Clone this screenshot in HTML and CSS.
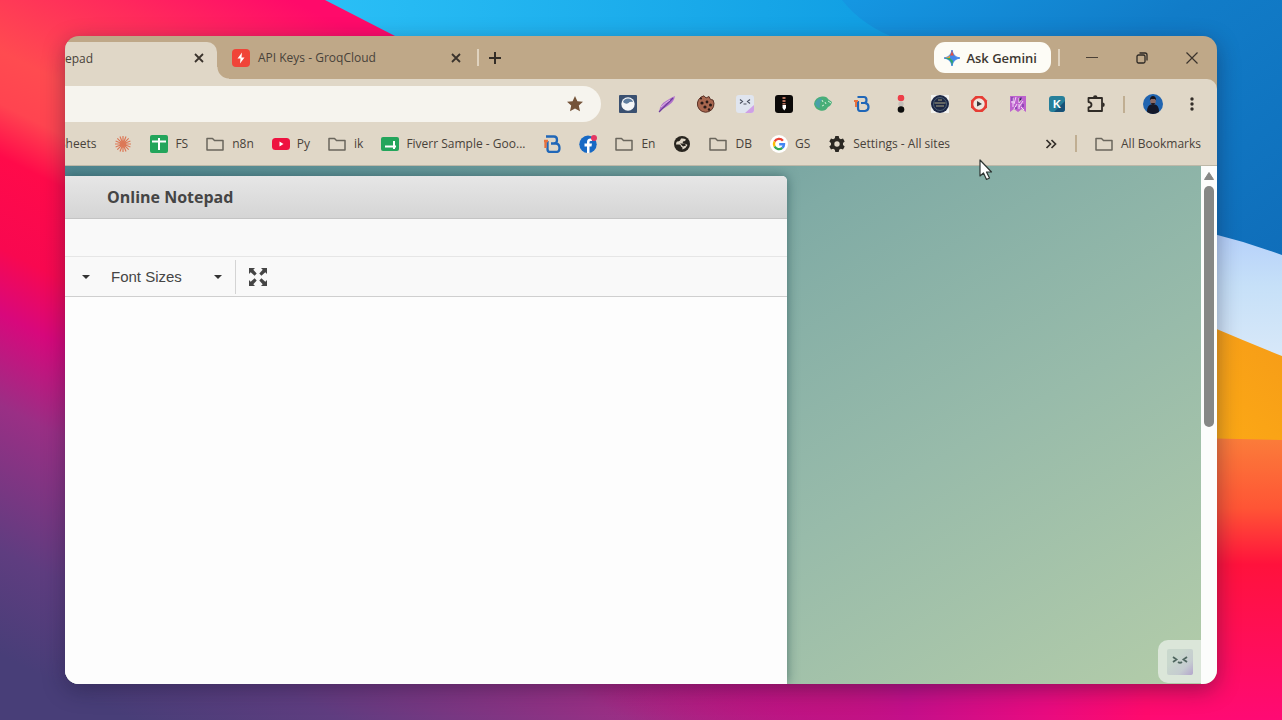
FILE: index.html
```html
<!DOCTYPE html>
<html lang="en">

<head>
  <meta charset="UTF-8">
  <title>Online Notepad</title>
  <link rel="stylesheet" href="styles.css">
</head>

<body>
  <!-- wallpaper -->
  <svg class="wallpaper" viewBox="0 0 1282 720" preserveAspectRatio="none" aria-hidden="true">
    <defs>
      <linearGradient id="sweep" gradientUnits="userSpaceOnUse" x1="200" y1="-400" x2="-325" y2="650">
        <stop offset=".27" stop-color="#ff0a6a" />
        <stop offset=".34" stop-color="#ff2a5c" />
        <stop offset=".42" stop-color="#ff4b50" />
        <stop offset=".46" stop-color="#ff4450" />
        <stop offset=".5" stop-color="#ff0a4a" />
        <stop offset=".57" stop-color="#f80850" />
        <stop offset=".62" stop-color="#d8087c" />
        <stop offset=".69" stop-color="#9a2f85" />
        <stop offset=".8" stop-color="#5f3d80" />
        <stop offset=".88" stop-color="#483e78" />
      </linearGradient>
      <linearGradient id="floor">
        <stop offset="0" stop-color="#8f2d85" stop-opacity="0" />
        <stop offset=".45" stop-color="#c40f8a" />
        <stop offset=".65" stop-color="#e80b80" />
        <stop offset=".8" stop-color="#ff0a6d" />
      </linearGradient>
      <linearGradient id="sky">
        <stop offset="0" stop-color="#2abff6" />
        <stop offset=".55" stop-color="#12a0e4" />
        <stop offset="1" stop-color="#1182d2" />
      </linearGradient>
      <linearGradient id="deep" x2="1" y2="1">
        <stop offset="0" stop-color="#1597e2" />
        <stop offset=".4" stop-color="#117cc8" />
        <stop offset="1" stop-color="#0f6cb8" />
      </linearGradient>
      <linearGradient id="cloud" x2="0" y2="1">
        <stop offset="0" stop-color="#b2cdfb" />
        <stop offset=".4" stop-color="#c6e0f8" />
        <stop offset="1" stop-color="#deebf9" />
      </linearGradient>
      <linearGradient id="sun" x1="1" x2="0" y2="1">
        <stop offset="0" stop-color="#f59a18" />
        <stop offset="1" stop-color="#ffae14" />
      </linearGradient>
      <linearGradient id="fire" x2="0" y2="1">
        <stop offset="0" stop-color="#fb7d3a" />
        <stop offset=".25" stop-color="#ff5535" />
        <stop offset=".45" stop-color="#ff123c" />
        <stop offset="1" stop-color="#ff0a74" />
      </linearGradient>
    </defs>
    <rect width="1282" height="720" fill="url(#sweep)" />
    <rect x="600" y="600" width="682" height="120" fill="url(#floor)" />
    <path d="M325 0 L395 36 L500 90 H1282 V0 Z" fill="url(#sky)" />
    <path d="M842 0 Q862 26 900 40 L1150 300 H1282 V0 Z" fill="url(#deep)" />
    <path d="M1150 222 Q1217 231 1282 255 V380 H1150 Z" fill="url(#cloud)" />
    <path d="M1150 300 Q1217 330 1282 356 V445 H1150 Z" fill="url(#sun)" />
    <path d="M1150 437 L1282 440 V720 H1150 Z" fill="url(#fire)" />
  </svg>

  <div class="window">
    <div class="tabs">
      <div class="tab active">
        <span>epad</span>
        <button class="plain close" aria-label="Close tab">
          <svg width="10" height="10" viewBox="0 0 10 10"><path d="M1 1l8 8M9 1l-8 8" stroke="#3a332c" stroke-width="1.800" /></svg>
        </button>
      </div>
      <div class="tab other">
        <svg width="18" height="18" viewBox="0 0 18 18"><rect width="18" height="18" rx="4" fill="#f04438" /><path d="M10 3.500L5.500 9.500H8.500L8 14.500L12.500 8.500H9.500Z" fill="#fff" /></svg>
        <span class="grow">API Keys - GroqCloud</span>
        <button class="plain close" aria-label="Close tab">
          <svg width="10" height="10" viewBox="0 0 10 10"><path d="M1 1l8 8M9 1l-8 8" stroke="#3a332c" stroke-width="1.800" /></svg>
        </button>
      </div>
      <i class="line light"></i>
      <button class="plain" aria-label="New tab">
        <svg width="12" height="12" viewBox="0 0 12 12"><path d="M6 0v12M0 6h12" stroke="#332d27" stroke-width="2" /></svg>
      </button>
      <div class="controls">
        <button class="gemini">
          <svg width="16" height="16" viewBox="0 0 16 16"><path d="M8 0Q9 7 16 8Q9 9 8 16Q7 9 0 8Q7 7 8 0Z" fill="#4486e8" stroke="#4486e8" /><path d="M8 0Q8.500 4 10 5.500L6 5.500Q7.500 4 8 0Z" fill="#e8503e" /><path d="M0 8Q4 7.500 6 5.500V8Z" fill="#e59a3a" /><path d="M8 16Q7.500 12 6 10.500Q4 8.500 0 8L6 8L9 11Z" fill="#2fa866" /></svg>
          Ask Gemini
        </button>
        <i class="line light"></i>
        <div class="winbtns">
          <button class="plain" aria-label="Minimize"><svg width="12" height="12" viewBox="0 0 12 12"><path d="M0 5.500h12" stroke="#4a4036" /></svg></button>
          <button class="plain" aria-label="Restore"><svg width="12" height="12" viewBox="0 0 12 12" fill="none" stroke="#2e2924" stroke-width="1.300"><rect x="1" y="3" width="8" height="8" rx="1.500" /><path d="M3.500 1H9a2 2 0 0 1 2 2V8.500" /></svg></button>
          <button class="plain" aria-label="Close window"><svg width="12" height="12" viewBox="0 0 12 12"><path d="M.5.5l11 11M11.500.5l-11 11" stroke="#3a332c" stroke-width="1.200" /></svg></button>
        </div>
      </div>
    </div>

    <div class="chrome">
      <div class="toolbar">
        <div class="omnibox">
          <input type="text" aria-label="Address and search bar">
          <button class="plain" aria-label="Edit bookmark">
            <svg width="16" height="16" viewBox="0 0 16 16"><path d="M8 0l2.400 5.200 5.600.6-4.200 3.800 1.200 5.700L8 12.400 3 15.300l1.200-5.700L0 5.800l5.600-.6z" fill="#75543a" /></svg>
          </button>
        </div>
        <div class="extensions">
          <button class="plain" aria-label="Wave extension"><svg viewBox="0 0 18 18"><rect width="18" height="18" rx="1" fill="#3a5070" /><circle cx="9" cy="9" r="6.700" fill="#f4f6f8" /><path d="M4 7Q5 3.500 9 3.500Q13 3.500 14 7Q11 6 9.500 8Q7 10 4 7" fill="#5f7ea0" /></svg></button>
          <button class="plain" aria-label="Feather extension"><svg viewBox="0 0 18 18"><path d="M1 17Q2 9 8 6Q12 3 17 1Q16 7 11 10Q7 13 4 14Z" fill="#b274cc" /><path d="M1 17L15 3" stroke="#6f3c9c" stroke-width="1.200" /><path d="M3 12Q7 8 12 5" stroke="#e0b4e4" fill="none" /></svg></button>
          <button class="plain" aria-label="Cookie extension"><svg viewBox="0 0 18 18"><path d="M7 .8A8.300 8.300 0 1 0 16 5L13.500 4.500L12 1.500L9 3Z" fill="#a8674f" stroke="#5b3328" /><circle cx="5" cy="8" r="1.600" fill="#2a1a18" /><circle cx="10" cy="7" r="1.400" fill="#2a1a18" /><circle cx="13.500" cy="10" r="1.500" fill="#2a1a18" /><circle cx="8" cy="12" r="1.600" fill="#2a1a18" /><circle cx="12" cy="14.500" r="1.200" fill="#2a1a18" /><circle cx="4" cy="3.500" r="1" fill="#2a1a18" /></svg></button>
          <button class="plain" aria-label="Face extension"><svg viewBox="0 0 18 18"><rect width="18" height="18" rx="3" fill="#e0e5ef" /><path d="M18 10V15a3 3 0 0 1-3 3H9Z" fill="#cfa0e6" /><path d="M4 4.500l2.500 2L4 8.500M14 4.500l-2.500 2L14 8.500M7.500 9h3" stroke="#4c5260" fill="none" stroke-width="1.200" /></svg></button>
          <button class="plain" aria-label="Tie extension"><svg viewBox="0 0 18 18"><rect width="18" height="18" rx="3" fill="#0b0908" /><path d="M7.500 2h3v2h-3zM7.500 5h3v2h-3zM7.500 8h3v1.500h-3z" fill="#b5705c" /><path d="M7.500 10h3.500v3l-1.700 2.500L7.500 13z" fill="#fff" /></svg></button>
          <button class="plain" aria-label="Leaf extension"><svg viewBox="0 0 18 18"><path d="M0 9Q1 2 8 1.500Q13 1 14 4L18 7Q17 11 14 12Q11 17 6 15.500Q1 14 0 9" fill="#48ae78" /><path d="M1 8Q4 2 8 4Q5 8 6 13Q2 13 1 8" fill="#48a0a8" /><path d="M8 5l1 2M11 7l1 2M8 11l2-1M14 6l3 2" stroke="#d0eed5" /></svg></button>
          <button class="plain" aria-label="B extension"><svg viewBox="0 0 18 18" fill="none" stroke="#2067b8" stroke-width="2.200"><path d="M4.500 2H11Q13.500 2 13.500 5T11 8H8H12Q15.500 8.500 15.500 12T12 16H7Q5 16 5 13V6" /><path d="M3 5V12M1 6h4" stroke="#e9713d" stroke-width="2" /></svg></button>
          <button class="plain" aria-label="Recorder extension"><svg viewBox="0 0 18 18"><circle cx="9" cy="3" r="3.300" fill="#ee3e48" /><circle cx="9" cy="9" r="2.700" fill="#c4bfba" /><circle cx="9" cy="14.500" r="3.300" fill="#0d0d0d" /></svg></button>
          <button class="plain" aria-label="Badge extension"><svg viewBox="0 0 18 18"><rect width="18" height="18" fill="#f3f3f0" /><circle cx="9" cy="9" r="9" fill="#1d2745" /><circle cx="9" cy="9" r="6.500" fill="none" stroke="#4b6074" /><path d="M3.500 8h11M5 11h8M7 5h4" stroke="#a8a482" stroke-width="1.200" /></svg></button>
          <button class="plain" aria-label="Video extension"><svg viewBox="0 0 18 18"><path d="M5.500 1h7L17 5.500v7L12.500 17h-7L1 12.500v-7Z" fill="#e63c34" /><circle cx="9" cy="9" r="5.700" fill="#eee7df" /><path d="M7 6l5 3-5 2.500z" fill="#39383c" /></svg></button>
          <button class="plain" aria-label="Pattern extension"><svg viewBox="0 0 18 18"><path d="M1 1H17V17L13 14L9 17L5 14L1 17Z" fill="#bd62ce" /><path d="M4 3v9M7 2l-2 7M10 3v5l3-4M8 9l-3 5M14 6l-4 6M12 12l3 3M2 7h3M10 14V9" stroke="#f3d9f7" stroke-width="1" /><path d="M3 2v4M12 2v3M7 12v2M14 9v3" stroke="#60329b" /></svg></button>
          <button class="plain" aria-label="K extension"><svg viewBox="0 0 18 18"><rect x="1" y="1" width="16" height="16" rx="3" fill="#267f9a" /><path d="M17 6V14a3 3 0 0 1-3 3H6Z" fill="#175177" /><text x="9" y="13" text-anchor="middle" class="mark">K</text></svg></button>
          <button class="plain" aria-label="Extensions"><svg viewBox="0 0 18 18"><path d="M1.500 3H15V16H1.500V12.500Q4.500 12 4.500 9.700T1.500 7Z" fill="none" stroke="#302b26" stroke-width="1.800" stroke-linejoin="round" /><path d="M6 2.500a2.200 2.200 0 0 1 4.500 0zM15.500 7.500a2.200 2.200 0 0 1 0 4.500z" fill="#302b26" /></svg></button>
        </div>
        <i class="line"></i>
        <button class="plain profile" aria-label="Profile"><svg width="20" height="20" viewBox="0 0 20 20"><circle cx="10" cy="10" r="10" fill="#2064b0" /><path d="M4 18Q4 11 8 10.500H12Q16 11 16 18Q10 22 4 18" fill="#141829" /><ellipse cx="10" cy="7" rx="2.800" ry="3.800" fill="#8a6a66" /><path d="M6.800 6.500Q7 2 10 2T13.200 6.500L12 5H8Z" fill="#17141d" /><path d="M8 9h4l-1 2.500H9z" fill="#221c25" /></svg></button>
        <button class="plain" aria-label="Menu"><svg width="18" height="18" viewBox="0 0 18 18" fill="#332e29"><circle cx="9" cy="4" r="1.700" /><circle cx="9" cy="9" r="1.700" /><circle cx="9" cy="14" r="1.700" /></svg></button>
      </div>

      <nav class="bookmarks" aria-label="Bookmarks">
        <a href="#">Sheets</a>
        <a href="#" aria-label="Claude"><svg viewBox="0 0 18 18" stroke="#dc7857" stroke-width="1.200"><path d="M9 1v16M1 9h16M3.300 3.300l11.400 11.400M14.700 3.300L3.300 14.700M6 1.600l6 14.800M12 1.600L6 16.400M1.600 6l14.800 6M16.400 6L1.600 12" /></svg></a>
        <a href="#"><svg viewBox="0 0 18 18"><rect width="18" height="18" rx="2" fill="#23a55b" /><path d="M2 6.500h14M9 3v12" stroke="#fff" stroke-width="2" /></svg>FS</a>
        <a href="#" class="folder"><svg viewBox="0 0 18 18"><path d="M1 3.500H6.500L8.500 5.500H17V15H1Z" fill="none" stroke="#6a665c" stroke-width="1.500" stroke-linejoin="round" /></svg>n8n</a>
        <a href="#"><svg viewBox="0 0 18 18"><rect y="3" width="18" height="12" rx="3.500" fill="#ee1240" /><path d="M7.500 6.500l4 2.500-4 2.500z" fill="#fff" /></svg>Py</a>
        <a href="#" class="folder"><svg viewBox="0 0 18 18"><path d="M1 3.500H6.500L8.500 5.500H17V15H1Z" fill="none" stroke="#6a665c" stroke-width="1.500" stroke-linejoin="round" /></svg>ik</a>
        <a href="#"><svg viewBox="0 0 18 18"><rect y="2" width="18" height="14" rx="2" fill="#23a55b" /><path d="M4 11.500h11M13 6v8" stroke="#fff" stroke-width="2" /></svg>Fiverr Sample - Goo...</a>
        <a href="#" aria-label="B"><svg viewBox="0 0 18 18" fill="none" stroke="#2067b8" stroke-width="2.300"><path d="M3 1.500H11Q14 1.500 14 5T11 8.500H8H13Q16.500 9 16.500 13T13 17H7Q4.500 17 4.500 14V6" /><path d="M2.500 5V13M1 6h4" stroke="#e9713d" /></svg></a>
        <a href="#" aria-label="Facebook"><svg viewBox="0 0 18 18"><circle cx="9" cy="9.300" r="8.700" fill="#1769c4" /><path d="M8 18V11.500H5.500V8.500H8V7Q8 3.500 11.500 3.500H13V6H11.800Q10.500 6 10.500 7.300V8.500H13L12.500 11.500H10.500V18Z" fill="#fff" /><circle cx="15" cy="3" r="3" fill="#e53762" /></svg></a>
        <a href="#" class="folder"><svg viewBox="0 0 18 18"><path d="M1 3.500H6.500L8.500 5.500H17V15H1Z" fill="none" stroke="#6a665c" stroke-width="1.500" stroke-linejoin="round" /></svg>En</a>
        <a href="#" aria-label="Site"><svg viewBox="0 0 18 18"><circle cx="9" cy="9" r="8" fill="#28251f" /><path d="M8 3.500Q11 3 13 4.500Q12.500 6.500 10 6.500Q9 7.500 10.500 8.500Q13.500 8.500 14.500 10Q13 13.500 9.500 14.500Q10 12 8 11.500Q8 10 6.500 9.500H3Q3 7.500 4 6.500Q7 7 8 3.500" fill="#e0d7c7" /><path d="M7 8.500h5l1 2-3 1z" fill="#28251f" /></svg></a>
        <a href="#" class="folder"><svg viewBox="0 0 18 18"><path d="M1 3.500H6.500L8.500 5.500H17V15H1Z" fill="none" stroke="#6a665c" stroke-width="1.500" stroke-linejoin="round" /></svg>DB</a>
        <a href="#"><svg viewBox="0 0 18 18" fill="none" stroke-width="2.400"><circle cx="9" cy="9" r="9" fill="#fff" /><path d="M12.900 5.700A5 5 0 0 0 4.600 6.500" stroke="#ea4335" /><path d="M4.600 6.500A5.300 5.300 0 0 0 4.600 11.500" stroke="#fbbc05" /><path d="M4.600 11.500A5 5 0 0 0 12.300 12.900" stroke="#34a853" /><path d="M12.300 12.900Q14 11.500 14 9.200H9.200" stroke="#4285f4" /></svg>GS</a>
        <a href="#"><svg viewBox="0 0 18 18"><path d="M7.300 1h3.400l.5 2.300 1.600.9 2.200-.8 1.700 3-1.700 1.600v2l1.700 1.600-1.700 3-2.200-.8-1.600.9-.5 2.300H7.300l-.5-2.300-1.600-.9-2.200.8-1.700-3L3 10V8L1.300 6.400l1.700-3 2.200.8 1.600-.9Z" fill="#2b2823" /><circle cx="9" cy="9" r="2.700" fill="#e0d7c7" /></svg>Settings - All sites</a>
        <div class="more">
          <button class="plain" aria-label="More bookmarks"><svg width="12" height="12" viewBox="0 0 12 12"><path d="M1.500 2l4 4-4 4M6.500 2l4 4-4 4" fill="none" stroke="#332e29" stroke-width="1.700" /></svg></button>
          <i class="line"></i>
          <a href="#" class="folder"><svg viewBox="0 0 18 18"><path d="M1 3.500H6.500L8.500 5.500H17V15H1Z" fill="none" stroke="#6a665c" stroke-width="1.500" stroke-linejoin="round" /></svg>All Bookmarks</a>
        </div>
      </nav>
    </div>

    <div class="view">
      <main class="page">
        <div class="notepad">
          <h1>Online Notepad</h1>
          <div class="menubar"></div>
          <div class="tools">
            <button class="plain caret" aria-label="Font family"><svg width="8" height="4" viewBox="0 0 8 4"><path d="M0 0h8L4 4z" fill="#333" /></svg></button>
            <label class="sizes">
              <select aria-label="Font Sizes">
                <option>Font Sizes</option>
              </select>
              <svg width="8" height="4" viewBox="0 0 8 4"><path d="M0 0h8L4 4z" fill="#333" /></svg>
            </label>
            <button class="plain full" aria-label="Fullscreen"><svg width="20" height="20" viewBox="0 0 20 20" fill="#454545"><path d="M1 1H7L5.300 2.700L8.700 6.600L6.600 8.700L2.700 5.300L1 7Z" /><path d="M19 1H13L14.700 2.700L11.300 6.600L13.400 8.700L17.300 5.300L19 7Z" /><path d="M1 19H7L5.300 17.300L8.700 13.400L6.600 11.300L2.700 14.700L1 13Z" /><path d="M19 19H13L14.700 17.300L11.300 13.400L13.400 11.300L17.300 14.700L19 13Z" /></svg></button>
          </div>
          <textarea class="editor" aria-label="Note"></textarea>
        </div>
        <button class="assistant" aria-label="Assistant">
          <svg width="26" height="26" viewBox="0 0 26 26">
            <defs><linearGradient id="face" x2="1" y2="1"><stop offset=".3" stop-color="#c9d8cd" /><stop offset=".7" stop-color="#c5ccd0" /><stop offset="1" stop-color="#b3a5cc" /></linearGradient></defs>
            <rect width="26" height="26" rx="2" fill="url(#face)" />
            <path d="M6 8l3.500 2.500L6 13M20 8l-3.500 2.500L20 13M11 13q2 1.500 4 0" fill="none" stroke="#4f665f" stroke-width="1.800" />
          </svg>
        </button>
      </main>
      <div class="scrollbar">
        <svg width="10" height="8" viewBox="0 0 10 8"><path d="M5 0.500L9.500 7.500H.5Z" fill="#868886" stroke="#868886" stroke-linejoin="round" /></svg>
        <div class="thumb"></div>
      </div>
    </div>
  </div>

  <svg class="cursor" width="14" height="22" viewBox="0 0 14 22"><path d="M1 1V17L4.500 14L7.500 20.500L10.500 19L7.500 13H12.500Z" fill="#fff" stroke="#2d3532" stroke-width="1.200" stroke-linejoin="round" /></svg>
</body>

</html>
```

FILE: styles.css
```css
* {
  box-sizing: border-box;
}

body {
  margin: 0;
  height: 100vh;
  padding: 36px 65px;
  overflow: hidden;
  position: relative;
  font-family: "Open Sans", "Noto Sans", sans-serif;
  font-size: 12px;
  color: #48423a;
}

svg {
  display: block;
  flex-shrink: 0;
}

.wallpaper {
  position: absolute;
  top: 0;
  left: 0;
  width: 100%;
  height: 100%;
}

.window {
  position: relative;
  height: 100%;
  display: flex;
  flex-direction: column;
  background: #bfa888;
  border-radius: 14px;
  box-shadow: 0 6px 22px rgba(20, 20, 50, 0.4);
  overflow: hidden;
}

.plain {
  display: flex;
  align-items: center;
  justify-content: center;
  padding: 0;
  border: none;
  background: none;
  cursor: pointer;
}

.line {
  width: 2px;
  height: 17px;
  background: #c0ae92;
}

.line.light {
  background: #e0d3bf;
}

/* tabs */

.tabs {
  display: flex;
  align-items: center;
  height: 43px;
}

.tab {
  display: flex;
  align-items: center;
}

.tab.active {
  position: relative;
  align-self: flex-end;
  justify-content: space-between;
  width: 152px;
  height: 37px;
  padding-right: 13px;
  padding-bottom: 5px;
  background: #e0d7c7;
  border-top-right-radius: 10px;
}

.tab.active::after {
  content: "";
  position: absolute;
  left: 100%;
  bottom: 0;
  width: 12px;
  height: 12px;
  background: radial-gradient(circle at 100% 0, transparent 11px, #e0d7c7 12px);
}

.tab.other {
  width: 260px;
  padding: 0 16px 0 15px;
  gap: 8px;
}

.grow {
  flex: 1;
}

.tabs > .line {
  margin-right: 10px;
}

.controls {
  display: flex;
  align-items: center;
  gap: 7px;
  margin-left: auto;
}

.gemini {
  display: flex;
  align-items: center;
  gap: 6px;
  height: 31px;
  padding: 0 14px 0 10px;
  border: none;
  border-radius: 11px;
  background: #fdfcf6;
  font-family: inherit;
  font-size: 13px;
  font-weight: 600;
  color: #3d3831;
}

.winbtns {
  display: flex;
}

.winbtns .plain {
  width: 50px;
  height: 30px;
}

/* address bar and bookmarks */

.chrome {
  background: #e0d7c7;
  border-top-right-radius: 10px;
  border-bottom: 1px solid #bdb8a8;
}

.toolbar {
  display: flex;
  align-items: center;
  gap: 18px;
  padding: 7px 16px 0 0;
}

.omnibox {
  flex: 1;
  display: flex;
  align-items: center;
  height: 36px;
  padding-right: 18px;
  background: #f6f4ee;
  border-radius: 0 18px 18px 0;
}

.omnibox input {
  flex: 1;
  min-width: 0;
  border: none;
  background: none;
  outline: none;
}

.extensions {
  display: flex;
  gap: 21px;
}

.extensions svg,
.bookmarks a svg {
  width: 18px;
  height: 18px;
}

.profile {
  margin-right: 2px;
}

.mark {
  font: bold 11px "Liberation Sans", sans-serif;
  fill: #fff;
}

.bookmarks {
  display: flex;
  align-items: center;
  gap: 18px;
  height: 43px;
  margin-left: -6px;
  padding-right: 16px;
}

.bookmarks a {
  display: flex;
  align-items: center;
  gap: 7px;
  color: inherit;
  text-decoration: none;
  white-space: nowrap;
}

.bookmarks .folder {
  gap: 8px;
}

.more {
  display: flex;
  align-items: center;
  gap: 18px;
  margin-left: auto;
}

/* page */

.view {
  flex: 1;
  display: flex;
  min-height: 0;
}

.page {
  position: relative;
  flex: 1;
  display: flex;
  padding-top: 10px;
  overflow: hidden;
  background: linear-gradient(150deg, #4f8690 0%, #80aba5 40%, #98bbaa 68%, #b3cca9 100%);
}

.notepad {
  display: flex;
  flex-direction: column;
  width: 64%;
  max-width: 722px;
  border-top-right-radius: 5px;
  background: #fdfdfd;
  box-shadow: 0 0 12px rgba(30, 70, 75, 0.6);
  overflow: hidden;
}

.notepad h1 {
  margin: 0;
  padding: 0 42px;
  font-size: 16px;
  line-height: 42px;
  color: #454545;
  background: linear-gradient(#e6e6e6, #d5d5d5);
  border-bottom: 1px solid #c4c4c4;
}

.menubar {
  height: 38px;
  background: #f9f9f9;
  border-bottom: 1px solid #e6e6e6;
}

.tools {
  display: flex;
  align-items: center;
  height: 40px;
  background: #f9f9f9;
  border-bottom: 1px solid #cfcfcf;
}

.caret {
  width: 42px;
  height: 30px;
}

.sizes {
  display: flex;
  align-items: center;
  width: 129px;
  height: 34px;
  padding-right: 13px;
  padding-left: 4px;
  border-right: 1px solid #d4d4d4;
}

.sizes select {
  flex: 1;
  min-width: 0;
  padding: 0;
  border: none;
  background: none;
  appearance: none;
  font-family: "Liberation Sans", Arial, sans-serif;
  font-size: 15px;
  color: #454545;
}

.full {
  width: 43px;
  height: 34px;
}

.editor {
  flex: 1;
  padding: 12px;
  border: none;
  outline: none;
  resize: none;
  background: #fdfdfd;
}

.assistant {
  position: absolute;
  right: 0;
  bottom: 1px;
  display: flex;
  align-items: center;
  justify-content: center;
  width: 43px;
  height: 43px;
  padding: 0;
  border: none;
  border-radius: 10px 0 0 10px;
  background: #dbe6d9;
}

.scrollbar {
  display: flex;
  flex-direction: column;
  align-items: center;
  gap: 6px;
  width: 16px;
  padding-top: 6px;
  background: #fcfdfc;
}

.thumb {
  width: 10px;
  height: 47%;
  border-radius: 5px;
  background: #868886;
}

.cursor {
  position: absolute;
  left: 979px;
  top: 159px;
}
```
